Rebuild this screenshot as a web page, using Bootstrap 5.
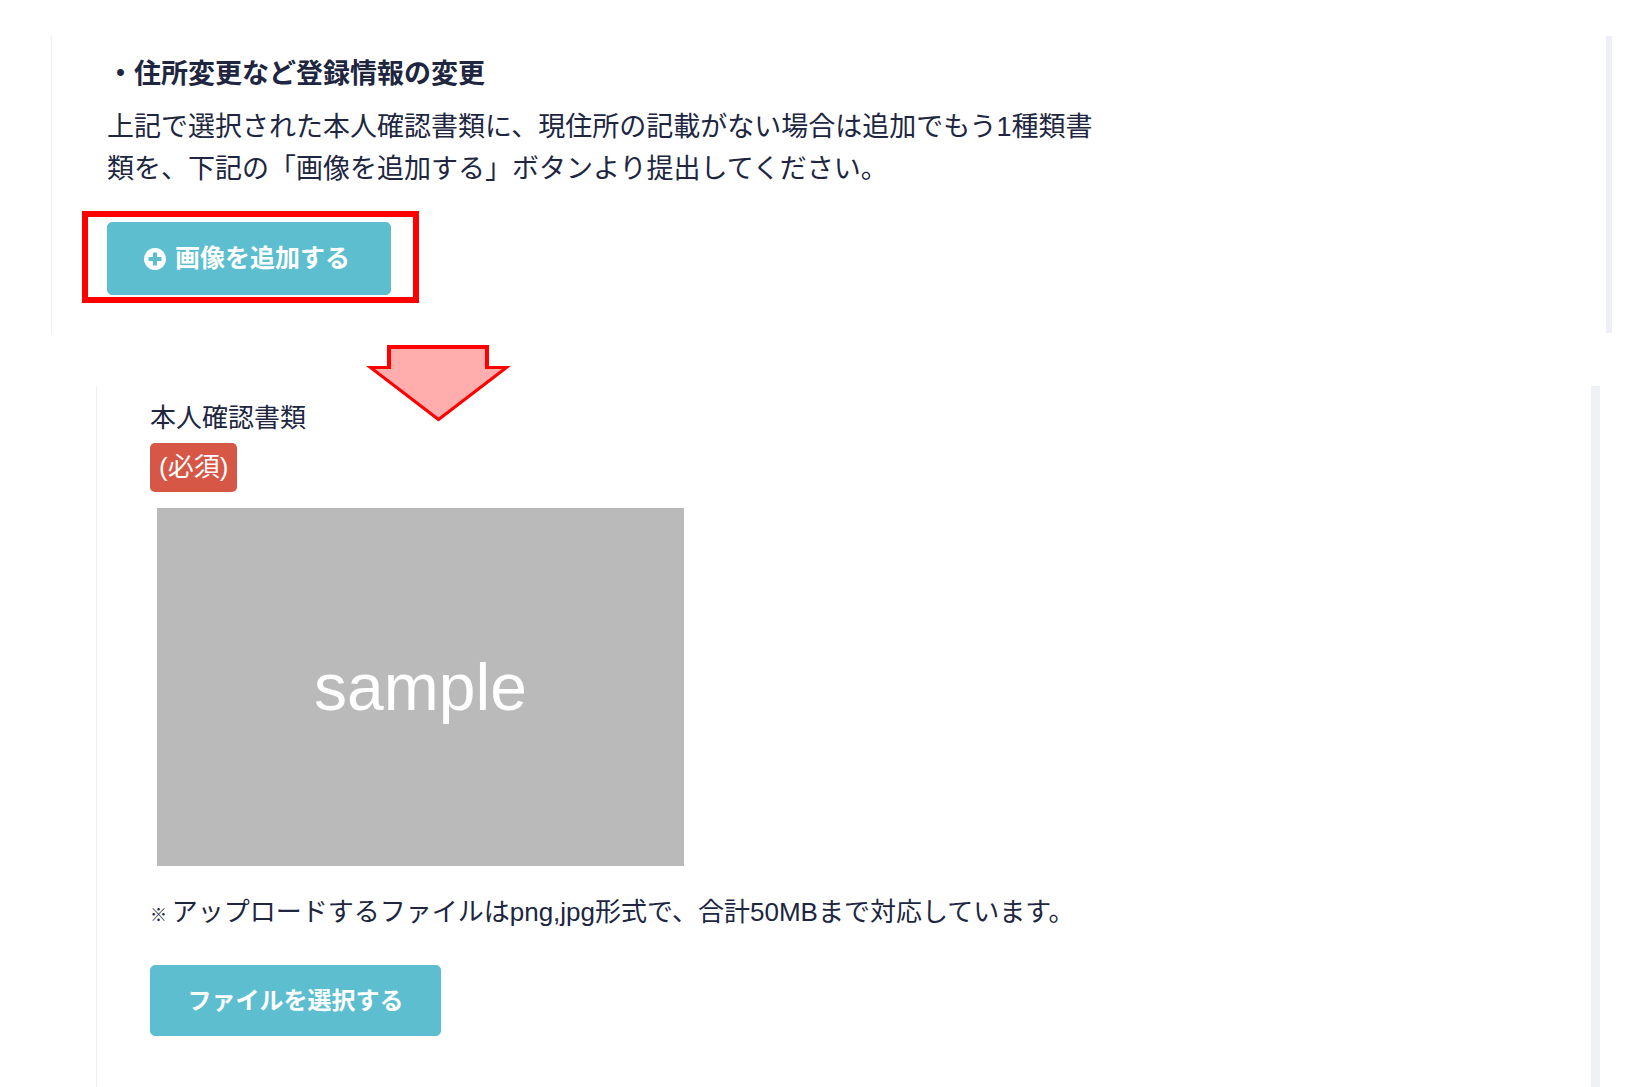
<!DOCTYPE html>
<html lang="ja">
<head>
<meta charset="utf-8">
<meta name="viewport" content="width=device-width, initial-scale=1">
<title>本人確認書類</title>
<link href="https://cdn.jsdelivr.net/npm/bootstrap@5.3.0/dist/css/bootstrap.min.css" rel="stylesheet">
<style>
  body { font-family: "Liberation Sans", "Noto Sans CJK JP", sans-serif; color: #20263f; background: #fff; line-height: 42px; }
  .guide { padding: 36px 38px 0 51px; }
  .panel-change { border-left: 1px solid #eeeff6; border-right: 6px solid #eeeff6; padding: 17px 24px 30px 55px; font-size: 27px; }
  .panel-change h2 { font-size: 27px; line-height: 42px; margin-bottom: 11px; }
  .panel-change p { max-width: 1008px; margin-bottom: 21px; }
  .panel-upload { border-left: 1px solid #eeeff6; border-right: 9px solid #eef1f6; margin: 0 12px 0 45px; padding: 11px 24px 32px 53px; font-size: 26px; }
  .highlight { border: 6px solid #f00; padding: 5px 22px 2px 19px; margin-left: -25px; }
  .btn-aqua { --bs-btn-color: #fff; --bs-btn-bg: #5cbecf; --bs-btn-border-color: #5cbecf; --bs-btn-hover-color: #fff; --bs-btn-hover-bg: #4bafc1; --bs-btn-hover-border-color: #4bafc1; --bs-btn-border-radius: 5px; --bs-btn-font-weight: 700; --bs-btn-padding-x: 36px; --bs-btn-padding-y: 14px; }
  .btn-add { --bs-btn-font-size: 25px; --bs-btn-line-height: 43px; gap: 9px; min-width: 284px; }
  .btn-file { --bs-btn-font-size: 24px; --bs-btn-line-height: 41px; min-width: 291px; margin-top: 32px; }
  .arrow-gap { height: 53px; }
  .arrow-gap svg { left: 315px; top: 12px; }
  .required-tag { background: #d65745; color: #fff; border-radius: 5px; padding: 0 9px; line-height: 49px; margin-top: 4px; }
  .sample-image { width: 527px; max-width: 100%; height: 358px; margin: 16px 0 25px 7px; background: #bababa; color: #fff; font-size: 66px; }
  .kome { font-size: 17px; line-height: 24px; }
</style>
</head>
<body>
<main class="guide d-flex flex-column min-vh-100">
  <section class="panel-change">
    <h2 class="fw-bold">・住所変更など登録情報の変更</h2>
    <p>上記で選択された本人確認書類に、現住所の記載がない場合は追加でもう1種類書類を、下記の「画像を追加する」ボタンより提出してください。</p>
    <div class="d-flex">
      <div class="highlight">
        <button type="button" class="btn btn-aqua btn-add d-flex align-items-center">
          <svg width="22" height="22" viewBox="0 0 22 22" aria-hidden="true"><circle cx="11" cy="11" r="11" fill="#fff"/><path d="M9 5.2q0-.7.7-.7h2.6q.7 0 .7.7V9h3.8q.7 0 .7.7v2.6q0 .7-.7.7H13v3.8q0 .7-.7.7H9.700q-.7 0-.7-.7V13H5.200q-.7 0-.7-.7V9.700q0-.7.7-.7H9z" fill="#5cbecf"/></svg>
          <span>画像を追加する</span>
        </button>
      </div>
    </div>
  </section>

  <div class="arrow-gap position-relative">
    <svg class="position-absolute" width="146" height="78" viewBox="0 0 146 78" aria-hidden="true"><path d="M23 23V3H121V23H141L72.500 75 5 23z" fill="#ffadad"/><path d="M23 24V2H121V24" fill="none" stroke="#f00" stroke-width="4"/><path d="M25 22.500H4.500L72.500 74.500 140.500 22.500H119" fill="none" stroke="#f00" stroke-width="3"/></svg>
  </div>

  <section class="panel-upload flex-grow-1">
    <div>本人確認書類</div>
    <div class="d-flex"><span class="required-tag">(必須)</span></div>
    <div class="sample-image d-flex align-items-center justify-content-center">sample</div>
    <p class="mb-0"><span class="kome">※ </span>アップロードするファイルはpng,jpg形式で、合計50MBまで対応しています。</p>
    <div class="d-flex"><button type="button" class="btn btn-aqua btn-file">ファイルを選択する</button></div>
  </section>
</main>
<script src="https://cdn.jsdelivr.net/npm/bootstrap@5.3.0/dist/js/bootstrap.bundle.min.js"></script>
</body>
</html>
